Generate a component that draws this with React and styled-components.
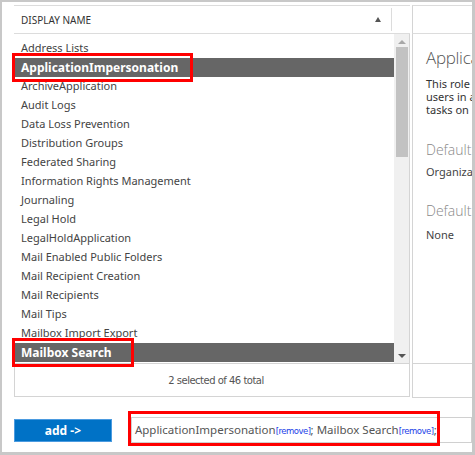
import React from 'react'
import styled, { createGlobalStyle } from 'styled-components'

const GlobalStyle = createGlobalStyle`
  body { margin: 0; background: #fff; }
`;

const roles = [
  'Address Lists',
  'ApplicationImpersonation',
  'ArchiveApplication',
  'Audit Logs',
  'Data Loss Prevention',
  'Distribution Groups',
  'Federated Sharing',
  'Information Rights Management',
  'Journaling',
  'Legal Hold',
  'LegalHoldApplication',
  'Mail Enabled Public Folders',
  'Mail Recipient Creation',
  'Mail Recipients',
  'Mail Tips',
  'Mailbox Import Export',
  'Mailbox Search',
  'Message Tracking',
];

const selected = ['ApplicationImpersonation', 'Mailbox Search'];

const Frame = styled.div`
  position: relative;
  width: 475px;
  height: 455px;
  box-sizing: border-box;
  border: solid #c8c8c8;
  border-width: 2px 3px 3px 2px;
  background: #fff;
  overflow: hidden;
  padding: 3px 0 0 12px;
  font-family: "Noto Sans", "Open Sans", sans-serif;
  color: #444;
`;

const Main = styled.div`
  display: flex;
  gap: 2px;
  width: 600px;
`;

const ListPanel = styled.div`
  width: 396px;
  display: flex;
  flex-direction: column;
`;

const Header = styled.div`
  height: 27px;
  border-top: 1px solid #dcdcdc;
  border-bottom: 1px solid #dcdcdc;
  display: flex;
  align-items: center;
`;

const HeaderCell = styled.div`
  width: 378px;
  height: 23px;
  box-sizing: border-box;
  border-right: 1px solid #dcdcdc;
  display: flex;
  align-items: center;
  justify-content: space-between;
  padding: 0 10px 0 7px;
  font-size: 10px;
  color: #333;
`;

const SortArrow = styled.span`
  width: 0;
  height: 0;
  border-left: 3.5px solid transparent;
  border-right: 3.5px solid transparent;
  border-bottom: 5px solid #555;
`;

const Body = styled.div`
  height: 329px;
  display: flex;
  overflow: hidden;
`;

const Rows = styled.div`
  flex: 1;
  padding-top: 5px;
`;

const Row = styled.div`
  height: 19px;
  box-sizing: border-box;
  line-height: ${p => (p.$active ? 19 : 18)}px;
  padding-left: 7px;
  font-size: ${p => (p.$active ? 12 : 11)}px;
  white-space: nowrap;
  background: ${p => (p.$active ? '#666' : 'transparent')};
  color: ${p => (p.$active ? '#fff' : '#444')};
  font-weight: ${p => (p.$active ? 700 : 400)};
`;

const Track = styled.div`
  width: 16px;
  background: #f0f0f0;
  border-right: 1px solid #d4d4d4;
  display: flex;
  flex-direction: column;
  align-items: center;
  padding: 6px 0 5px 1px;
  box-sizing: border-box;
`;

const ArrowUp = styled.span`
  width: 0;
  height: 0;
  border-left: 4px solid transparent;
  border-right: 4px solid transparent;
  border-bottom: 4px solid ${p => p.$color};
`;

const ArrowDown = styled.span`
  width: 0;
  height: 0;
  border-left: 4px solid transparent;
  border-right: 4px solid transparent;
  border-top: 4px solid ${p => p.$color};
`;

const Thumb = styled.div`
  width: 12px;
  height: 110px;
  margin-top: 3px;
  background: #c2c2c2;
`;

const Spacer = styled.div`
  flex: 1;
`;

const Footer = styled.div`
  height: 32px;
  border: 1px solid #d4d4d4;
  display: flex;
  align-items: center;
  justify-content: center;
  font-family: Tahoma, "DejaVu Sans", Verdana, sans-serif;
  font-size: 10px;
  color: #555;
  letter-spacing: -0.5px;
  padding-left: 8px;
`;

const DetailPanel = styled.div`
  width: 200px;
  display: flex;
  flex-direction: column;
`;

const DetailHeader = styled.div`
  height: 27px;
  border-top: 1px solid #dcdcdc;
  border-bottom: 1px solid #dcdcdc;
  border-left: 1px solid #d4d4d4;
`;

const DetailBody = styled.div`
  height: 329px;
  border-left: 1px solid #d4d4d4;
  padding: 12px 0 0 13px;
  box-sizing: border-box;
  white-space: nowrap;
`;

const DetailTitle = styled.div`
  font-family: "Open Sans", "Noto Sans", sans-serif;
  font-size: 17px;
  font-weight: 300;
  color: #555;
  line-height: 24px;
  letter-spacing: -0.3px;
`;

const Desc = styled.div`
  margin-top: 7px;
  font-size: 11px;
  line-height: 13px;
  color: #333;
`;

const Line = styled.div``;

const Label = styled.div`
  margin-top: ${p => p.$top}px;
  font-family: "Open Sans", "Noto Sans", sans-serif;
  font-size: 14px;
  font-weight: 300;
  color: #888;
  line-height: 20px;
`;

const Value = styled.div`
  margin-top: ${p => p.$top}px;
  font-size: 11px;
  line-height: 16px;
  color: #444;
`;

const DetailFooter = styled.div`
  height: 33px;
  border: 1px solid #d4d4d4;
`;

const Actions = styled.div`
  display: flex;
  align-items: center;
  margin-top: 19px;
  gap: 19px;
`;

const AddButton = styled.button`
  width: 99px;
  height: 23px;
  margin-top: 1px;
  background: #0072c6;
  border: 1px solid #4b9be0;
  color: #fff;
  font-family: "Noto Sans", "Open Sans", sans-serif;
  font-weight: 700;
  font-size: 12px;
  padding: 0;
`;

const Picked = styled.div`
  width: 340px;
  height: 24px;
  border: 1px solid #d0d0d0;
  padding-left: 3px;
  line-height: 24px;
  font-size: 11.5px;
  color: #555;
  white-space: nowrap;
`;

const Remove = styled.span`
  color: #1a3ee8;
  font-size: 8.5px;
  font-family: Tahoma, "DejaVu Sans", sans-serif;
  letter-spacing: -0.5px;
`;

const Callout = styled.div`
  position: absolute;
  border: 3px solid #f00;
  box-sizing: border-box;
  left: ${p => p.$x}px;
  top: ${p => p.$y}px;
  width: ${p => p.$w}px;
  height: ${p => p.$h}px;
`;

export default function App() {
  return (
    <>
      <GlobalStyle />
      <Frame>
        <Main>
          <ListPanel>
            <Header>
              <HeaderCell>
                DISPLAY NAME
                <SortArrow />
              </HeaderCell>
            </Header>
            <Body>
              <Rows>
                {roles.map(r => (
                  <Row key={r} $active={selected.includes(r)}>{r}</Row>
                ))}
              </Rows>
              <Track>
                <ArrowUp $color="#a8a8a8" />
                <Thumb />
                <Spacer />
                <ArrowDown $color="#555" />
              </Track>
            </Body>
            <Footer>2 selected of 46 total</Footer>
          </ListPanel>
          <DetailPanel>
            <DetailHeader />
            <DetailBody>
              <DetailTitle>ApplicationImpersonation</DetailTitle>
              <Desc>
                <Line>This role enables applications to impersonate</Line>
                <Line>users in an organization in order to perform</Line>
                <Line>tasks on behalf of the user.</Line>
              </Desc>
              <Label $top={24}>Default recipient scope</Label>
              <Value $top={4}>Organization</Value>
              <Label $top={21}>Default configuration scope</Label>
              <Value $top={6}>None</Value>
            </DetailBody>
            <DetailFooter />
          </DetailPanel>
        </Main>
        <Actions>
          <AddButton>add -&gt;</AddButton>
          <Picked>
            ApplicationImpersonation<Remove>[remove]</Remove>; Mailbox Search<Remove>[remove]</Remove>;
          </Picked>
        </Actions>
        <Callout $x={10} $y={51} $w={181} $h={29} />
        <Callout $x={10} $y={336} $w={122} $h={29} />
        <Callout $x={126} $y={409} $w={312} $h={35} />
      </Frame>
    </>
  )
}
